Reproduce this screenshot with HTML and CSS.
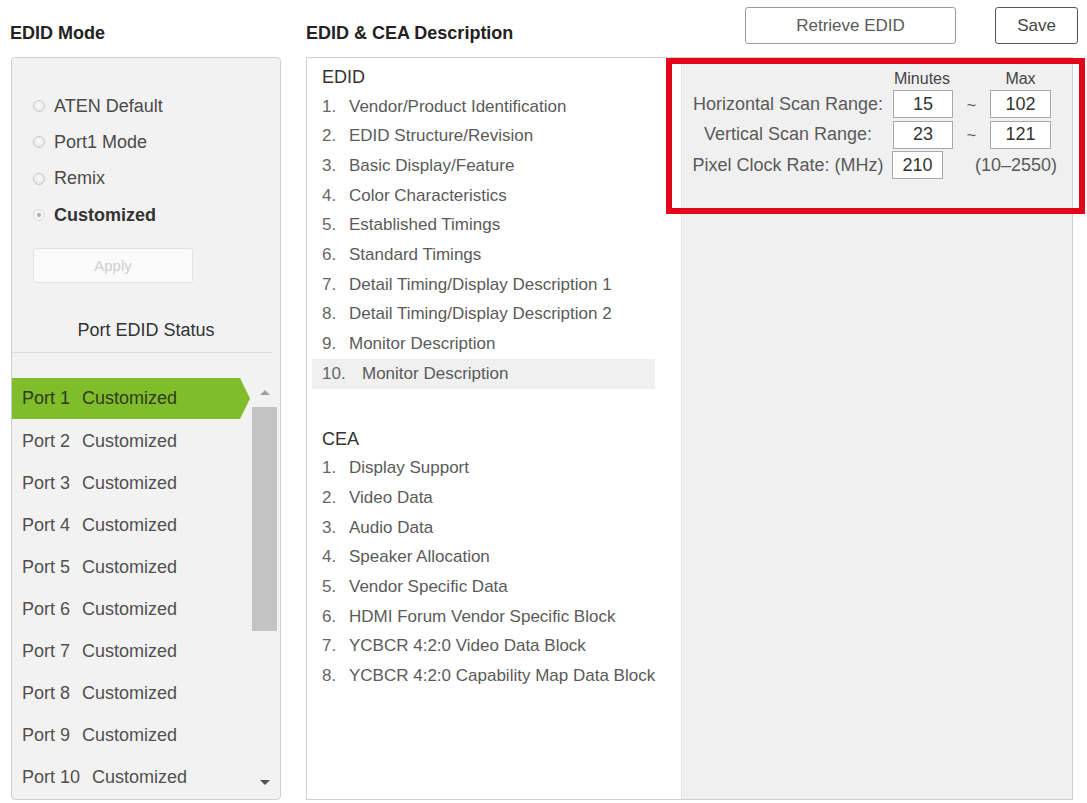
FILE: index.html
```html
<!DOCTYPE html>
<html lang="en">
<head>
<meta charset="utf-8">
<title>EDID Mode</title>
<link rel="stylesheet" href="styles.css">
</head>
<body>
<div class="page">
  <section class="col col-left">
    <div class="col-head">
      <h2 class="title">EDID Mode</h2>
    </div>
    <div class="mode-box">
      <ul class="radios">
        <li class="radio"><span class="dot"></span>ATEN Default</li>
        <li class="radio"><span class="dot"></span>Port1 Mode</li>
        <li class="radio"><span class="dot"></span>Remix</li>
        <li class="radio checked"><span class="dot"></span>Customized</li>
      </ul>
      <button class="apply" type="button">Apply</button>
      <div class="status-title">Port EDID Status</div>
      <div class="sep"></div>
      <div class="ports">
        <ul class="port-list">
          <li class="port active"><span class="pn">Port 1</span>Customized</li>
          <li class="port"><span class="pn">Port 2</span>Customized</li>
          <li class="port"><span class="pn">Port 3</span>Customized</li>
          <li class="port"><span class="pn">Port 4</span>Customized</li>
          <li class="port"><span class="pn">Port 5</span>Customized</li>
          <li class="port"><span class="pn">Port 6</span>Customized</li>
          <li class="port"><span class="pn">Port 7</span>Customized</li>
          <li class="port"><span class="pn">Port 8</span>Customized</li>
          <li class="port"><span class="pn">Port 9</span>Customized</li>
          <li class="port"><span class="pn">Port 10</span>Customized</li>
        </ul>
        <div class="scrollbar">
          <div class="sb-btn sb-up"><span class="tri-up"></span></div>
          <div class="sb-thumb"></div>
          <div class="sb-fill"></div>
          <div class="sb-btn sb-down"><span class="tri-down"></span></div>
        </div>
      </div>
    </div>
  </section>

  <section class="col col-right">
    <div class="col-head right-head">
      <h2 class="title">EDID &amp; CEA Description</h2>
      <div class="actions">
        <button class="btn btn-retrieve" type="button">Retrieve EDID</button>
        <button class="btn btn-save" type="button">Save</button>
      </div>
    </div>
    <div class="desc-box">
      <div class="desc-list">
        <div class="group-title">EDID</div>
        <ul class="items">
          <li><span class="num">1.</span>Vendor/Product Identification</li>
          <li><span class="num">2.</span>EDID Structure/Revision</li>
          <li><span class="num">3.</span>Basic Display/Feature</li>
          <li><span class="num">4.</span>Color Characteristics</li>
          <li><span class="num">5.</span>Established Timings</li>
          <li><span class="num">6.</span>Standard Timings</li>
          <li><span class="num">7.</span>Detail Timing/Display Description 1</li>
          <li><span class="num">8.</span>Detail Timing/Display Description 2</li>
          <li><span class="num">9.</span>Monitor Description</li>
          <li class="selected"><span class="num wide">10.</span>Monitor Description</li>
        </ul>
        <div class="group-title cea">CEA</div>
        <ul class="items">
          <li><span class="num">1.</span>Display Support</li>
          <li><span class="num">2.</span>Video Data</li>
          <li><span class="num">3.</span>Audio Data</li>
          <li><span class="num">4.</span>Speaker Allocation</li>
          <li><span class="num">5.</span>Vendor Specific Data</li>
          <li><span class="num">6.</span>HDMI Forum Vendor Specific Block</li>
          <li><span class="num">7.</span>YCBCR 4:2:0 Video Data Block</li>
          <li><span class="num">8.</span>YCBCR 4:2:0 Capability Map Data Block</li>
        </ul>
      </div>
      <div class="desc-detail">
        <div class="range-grid">
          <div class="cell"></div>
          <div class="cell head">Minutes</div>
          <div class="cell"></div>
          <div class="cell head">Max</div>

          <div class="cell label">Horizontal Scan Range:</div>
          <div class="cell in-min"><input class="field" value="15"></div>
          <div class="cell tilde">~</div>
          <div class="cell in-max"><input class="field" value="102"></div>

          <div class="cell label">Vertical Scan Range:</div>
          <div class="cell in-min"><input class="field" value="23"></div>
          <div class="cell tilde">~</div>
          <div class="cell in-max"><input class="field" value="121"></div>

          <div class="cell label">Pixel Clock Rate: (MHz)</div>
          <div class="cell in-clock"><input class="field field-sm" value="210"></div>
          <div class="cell range-note">(10–2550)</div>
        </div>
        <div class="highlight"></div>
      </div>
    </div>
  </section>
</div>
</body>
</html>
```

FILE: styles.css
```css
* {
  box-sizing: border-box;
}

html, body {
  margin: 0;
  padding: 0;
  background: #ffffff;
}

body {
  font-family: "Liberation Sans", Arial, sans-serif;
  color: #444;
  overflow: hidden;
}

ul {
  list-style: none;
  margin: 0;
  padding: 0;
}

.page {
  display: flex;
  gap: 25px;
  padding-left: 11px;
  width: 1087px;
  height: 803px;
}

.col {
  display: flex;
  flex-direction: column;
}

.col-left {
  width: 270px;
}

.col-right {
  width: 767px;
}

.col-head {
  height: 57px;
  display: flex;
  align-items: flex-end;
}

.title {
  margin: 0 0 14px -1px;
  font-size: 18px;
  line-height: 20px;
  font-weight: bold;
  color: #222;
}

.right-head {
  justify-content: space-between;
  margin-right: -5px;
}

.right-head .title {
  margin-left: 0;
}

.actions {
  align-self: flex-start;
  margin-top: 7px;
  display: flex;
  gap: 39px;
}

.btn {
  height: 37px;
  background: #fff;
  border: 1px solid #9a9a9a;
  border-radius: 3px;
  font-family: "Liberation Sans", Arial, sans-serif;
  font-size: 17px;
  color: #5a5a5a;
  padding: 0;
}

.btn-retrieve {
  width: 211px;
}

.btn-save {
  width: 83px;
  border-color: #555;
  color: #444;
}

/* ---------- left box ---------- */
.mode-box {
  height: 743px;
  border: 1px solid #cfcfcf;
  border-radius: 4px;
  background: #f2f2f2;
  display: flex;
  flex-direction: column;
  overflow: hidden;
}

.radios {
  padding: 30px 0 0 21px;
}

.radio {
  height: 36.33px;
  display: flex;
  align-items: center;
  font-size: 18px;
  color: #4a4a4a;
}

.radio.checked {
  font-weight: bold;
  color: #333;
}

.dot {
  width: 12px;
  height: 12px;
  border-radius: 50%;
  border: 1px solid #c8c8c8;
  background: radial-gradient(circle at 50% 40%, #fafafa 0, #e4e4e4 100%);
  margin-right: 9px;
  position: relative;
  flex: none;
}

.radio.checked .dot {
  border-color: #d8d8d8;
  background: #f4f4f4;
}

.radio.checked .dot::after {
  content: "";
  position: absolute;
  left: 3px;
  top: 3px;
  width: 4px;
  height: 4px;
  border-radius: 50%;
  background: #aaa;
}

.apply {
  margin: 15px 0 0 21px;
  width: 160px;
  height: 35px;
  background: #fafafa;
  border: 1px solid #e2e2e2;
  border-radius: 3px;
  font-family: "Liberation Sans", Arial, sans-serif;
  font-size: 15px;
  color: #cfcfcf;
  padding: 0;
}

.status-title {
  margin-top: 37px;
  text-align: center;
  font-size: 18px;
  line-height: 20px;
  color: #333;
}

.sep {
  margin: 12px 8px 0 -1px;
  height: 1px;
  background: #dcdcdc;
}

.ports {
  margin-top: 25px;
  flex: 1;
  display: flex;
}

.port-list {
  width: 238px;
  display: flex;
  flex-direction: column;
}

.port {
  height: 42.1px;
  display: flex;
  align-items: center;
  padding-left: 10px;
  font-size: 18px;
  color: #505050;
  white-space: nowrap;
}

.port.active {
  background: #7fbd2a;
  color: #2f3a1c;
  clip-path: polygon(0 0, calc(100% - 10px) 0, 100% 50%, calc(100% - 10px) 100%, 0 100%);
  height: 41px;
  margin-bottom: 1.1px;
}

.pn {
  margin-right: 12px;
}

.scrollbar {
  width: 25px;
  margin-left: 2px;
  display: flex;
  flex-direction: column;
}

.sb-btn {
  display: flex;
  align-items: center;
  justify-content: center;
  flex: none;
}

.sb-up {
  height: 29px;
}

.sb-down {
  height: 34px;
}

.tri-up {
  width: 0;
  height: 0;
  border-left: 5px solid transparent;
  border-right: 5px solid transparent;
  border-bottom: 5px solid #a0a0a0;
}

.tri-down {
  width: 0;
  height: 0;
  border-left: 5px solid transparent;
  border-right: 5px solid transparent;
  border-top: 5px solid #505050;
}

.sb-thumb {
  height: 224px;
  background: #c3c3c3;
  flex: none;
}

.sb-fill {
  flex: 1;
}

/* ---------- description box ---------- */
.desc-box {
  height: 743px;
  border: 1px solid #cfcfcf;
  display: flex;
}

.desc-list {
  width: 374px;
  background: #fff;
  padding: 4px 26px 0 5px;
}

.group-title {
  height: 30px;
  line-height: 30px;
  padding-left: 10px;
  font-size: 18px;
  color: #333;
}

.group-title.cea {
  margin-top: 35px;
}

.items li {
  height: 29.67px;
  display: flex;
  align-items: center;
  padding-left: 10px;
  font-size: 17px;
  color: #5a5a5a;
  white-space: nowrap;
}

.items li.selected {
  background: #f0f0f0;
}

.num {
  display: inline-block;
  width: 27px;
  flex: none;
  color: #666;
}

.num.wide {
  width: 40px;
}

.desc-detail {
  flex: 1;
  background: #f0f0f0;
  border-left: 1px solid #e4e4e4;
  position: relative;
  padding: 11px 0 0 3px;
}

.range-grid {
  display: grid;
  grid-template-columns: 206px 62px 37px 61px;
  grid-template-rows: 20px 30.5px 30.5px 30.5px;
  font-size: 18px;
  color: #5a5a5a;
}

.cell {
  display: flex;
  align-items: center;
  white-space: nowrap;
}

.cell.head {
  justify-content: center;
  font-size: 16px;
  color: #444;
}

.cell.label {
  justify-content: center;
}

.cell.tilde {
  justify-content: center;
  font-size: 16px;
  padding-top: 3px;
}

.cell.in-min {
  justify-content: flex-end;
}

.cell.in-clock {
  justify-content: flex-start;
  padding-left: 1px;
}

.cell.range-note {
  grid-column: 3 / span 2;
  padding-left: 22px;
  font-size: 18px;
}

.field {
  width: 60px;
  height: 28px;
  border: 1px solid #a8a8a8;
  background: #fff;
  text-align: center;
  font-family: "Liberation Sans", Arial, sans-serif;
  font-size: 18px;
  color: #333;
  padding: 0;
}

.in-max .field {
  width: 61px;
}

.field-sm {
  width: 51px;
}

.highlight {
  position: absolute;
  left: -16px;
  top: 0;
  width: 419px;
  height: 156px;
  border: 6px solid #e2061c;
  pointer-events: none;
}
```
